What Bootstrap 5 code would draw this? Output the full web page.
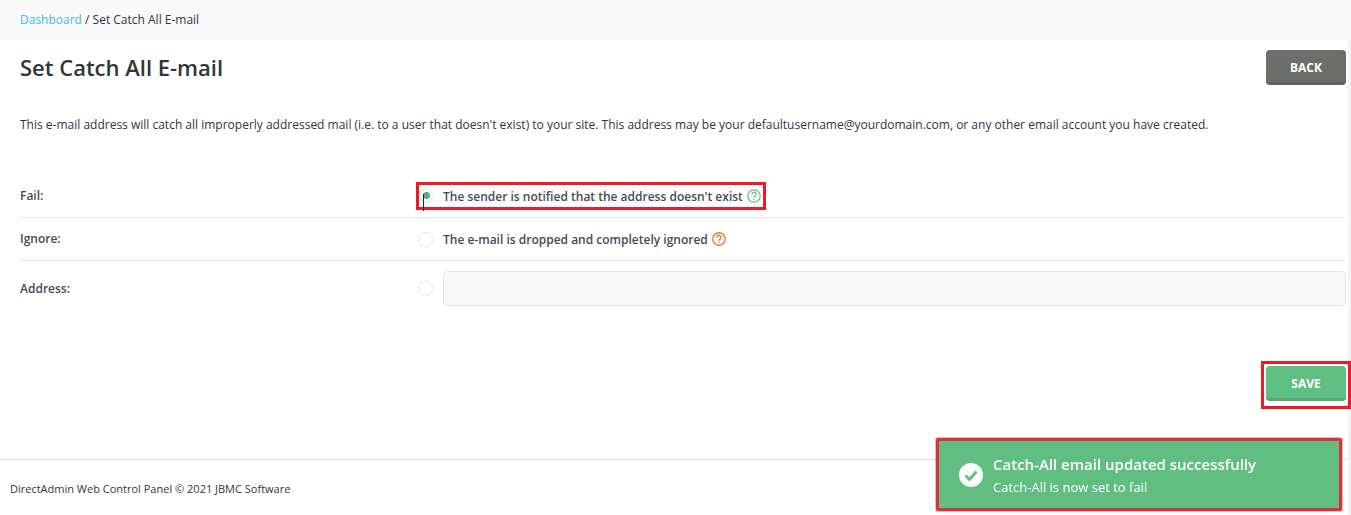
<!DOCTYPE html>
<html lang="en"><head><meta charset="utf-8"><title>Set Catch All E-mail</title>
<link href="https://cdn.jsdelivr.net/npm/bootstrap@5.3.0/dist/css/bootstrap.min.css" rel="stylesheet">
<style>
html,body{height:515px;overflow:hidden}
body{font-family:"Open Sans",sans-serif;font-size:12px;color:#31353d;background:#fff;width:1351px}
.crumbs{height:40px;background:#f9f9f9;padding-left:20px;font-size:12px;color:#31353d}
.crumbs a{color:#45b8e8;text-decoration:none}
.main-area{padding:0 5px 0 20px;height:419px}
.page-title{font-size:22px;font-weight:600;margin:0;line-height:30px;padding-top:2px}
.da-btn{border:0;border-radius:4px;color:#fff;font-weight:700;font-size:12px;width:80px;height:35px;padding:0;text-transform:uppercase;box-shadow:inset 0 -3px 0 rgba(0,0,0,.12)}
.back-btn{background:#6d6e6c}
.save-btn{background:#5fbf80}
.head-row{padding-top:10px}
.intro{font-size:12px;margin:0;padding-top:31px;line-height:18px;height:89px;white-space:nowrap}
.form-line{border-bottom:1px solid #e9e9e9;display:flex;align-items:center}
.form-line.l1{height:44px}.form-line.l2{height:43px}.form-line.l3{height:55px;border:0}
.line-label{width:397px;flex:none;font-size:12px;font-weight:600;color:#454954}
.choice{display:flex;align-items:center;font-size:12px;font-weight:600;color:#454a57}
.choice-text{padding-top:2px}
.circle{width:15px;height:15px;border:1px solid #e4e4e4;border-radius:50%;background:#fff;flex:none;margin-right:10px;position:relative;display:flex;align-items:center;justify-content:center}
.dot{width:7px;height:7px;border-radius:50%;background:#4fb477}
.caret{position:absolute;left:3px;top:5px;width:1px;height:17px;background:#222}
.mark-box{border:3px solid #ed1c24;height:28px;margin-left:-1px;width:350px}
.mark-box .circle{width:14px}
.plain{padding-left:1px}
.help{margin-left:4px;flex:none}
.addr-input{flex:1;height:35px;border:1px solid #e6e6e6;border-radius:4px;background:#f9f9f9;display:block}
.save-wrap{padding-top:45px}
.save-box{border:3px solid #ed1c24;padding:2px 2px 5px 2px;margin-right:-5px;line-height:0;position:relative;z-index:1}
.site-foot{border-top:1px solid #dedede;height:56px;padding:4px 0 0 10px;font-size:11px}
.toast-msg{position:fixed;z-index:2;left:936px;top:438px;width:406px;height:73px;background:#60bf80;border:3px solid #d8323f;border-radius:2px;color:#fff;padding-left:20px;box-shadow:0 0 0 1px rgba(216,50,63,.35)}
.toast-title{font-size:15px;font-weight:600;line-height:20px;padding-top:1px}
.toast-sub{font-size:13px;line-height:18px;margin-top:4px}
.toast-body-text{padding-left:2px}
.edge{position:fixed;right:0;top:40px;bottom:0;width:3px;background:#f3f3f3}
</style></head><body>
<nav class="crumbs d-flex align-items-center"><span><a href="#">Dashboard</a> / Set Catch All E-mail</span></nav>
<main class="main-area">
<div class="head-row d-flex justify-content-between align-items-start">
<h1 class="page-title">Set Catch All E-mail</h1>
<button class="da-btn back-btn" type="button">Back</button></div>
<p class="intro">This e-mail address will catch all improperly addressed mail (i.e. to a user that doesn't exist) to your site. This address may be your defaultusername@yourdomain.com, or any other email account you have created.</p>
<div class="form-line l1"><div class="line-label">Fail:</div>
<div class="choice mark-box"><span class="circle"><span class="dot"></span><span class="caret"></span></span><span class="choice-text">The sender is notified that the address doesn't exist</span>
<svg class="help" width="14" height="14" viewBox="0 0 14 14" fill="none" stroke="#5fbf80"><circle cx="7" cy="7" r="6.2" stroke-width="1.2"/><path d="M4.9 5.4a2.1 2.1 0 1 1 3.2 1.8c-.8.5-1.1.8-1.1 1.6" stroke-width="1.3"/><path d="M7 9.7v1.3" stroke-width="1.4"/></svg></div></div>
<div class="form-line l2"><div class="line-label">Ignore:</div>
<div class="choice plain"><span class="circle"></span><span class="choice-text">The e-mail is dropped and completely ignored</span>
<svg class="help" width="14" height="14" viewBox="0 0 14 14" fill="none" stroke="#f07a2a"><circle cx="7" cy="7" r="6.2" stroke-width="1.4"/><path d="M4.9 5.4a2.1 2.1 0 1 1 3.2 1.8c-.8.5-1.1.8-1.1 1.6" stroke-width="1.4"/><path d="M7 9.7v1.3" stroke-width="1.5"/></svg></div></div>
<div class="form-line l3"><div class="line-label">Address:</div>
<div class="choice plain flex-grow-1"><span class="circle"></span><input class="addr-input" type="text" aria-label="Address"></div></div>
<div class="save-wrap d-flex justify-content-end"><div class="save-box"><button class="da-btn save-btn" type="button">Save</button></div></div>
</main>
<footer class="site-foot d-flex align-items-center">DirectAdmin Web Control Panel © 2021 JBMC Software</footer>
<div class="edge"></div>
<div class="toast-msg d-flex align-items-center gap-2">
<svg width="24" height="24" viewBox="0 0 24 24" class="flex-shrink-0"><circle cx="12" cy="12" r="12" fill="#fff"/><path d="M6.5 12.5l4 4 7-8" fill="none" stroke="#60bf80" stroke-width="2.8"/></svg>
<div class="toast-body-text"><div class="toast-title">Catch-All email updated successfully</div><div class="toast-sub">Catch-All is now set to fail</div></div></div>
</body></html>
